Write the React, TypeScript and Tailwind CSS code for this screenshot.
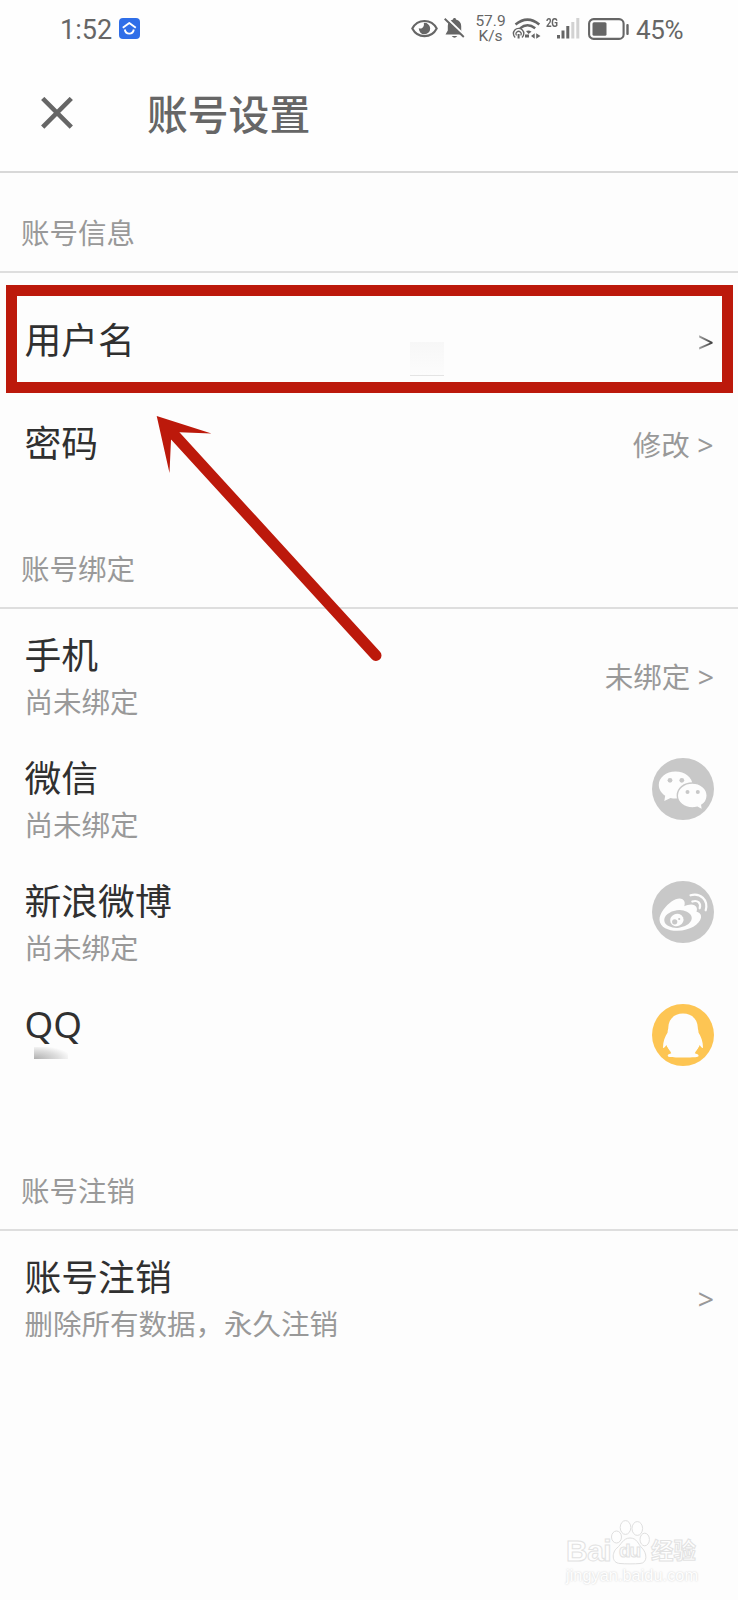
import type { ReactNode } from "react";

function StatusBar() {
  return (
    <div className="flex h-[58px] items-center pl-[60px] text-[#666] font-['Roboto','Noto_Sans_CJK_SC',sans-serif]">
      <span className="w-[59px] pt-[2px] text-[27px] leading-[30px]">1:52</span>
      <svg className="mb-[2px] h-[21px] w-[21px]" viewBox="0 0 21 21" fill="none">
        <rect width="21" height="21" rx="4" fill="#2f6ee8" />
        <path d="M3.8 9.8 L10.3 5 L16.8 9.8" stroke="#fff" strokeWidth="1.9" strokeLinejoin="round" />
        <path d="M5.8 11.5 C6.8 17 13.8 17 14.8 11.5" stroke="#fff" strokeWidth="1.9" />
      </svg>

      <svg className="mb-[2px] ml-[271px] h-[19px] w-[27px]" viewBox="0 0 27 19" fill="none">
        <path d="M1.3 9.5 C6.5 -.6 20.5 -.6 25.7 9.5 C20.5 19.6 6.5 19.6 1.3 9.5Z" stroke="#666" strokeWidth="2.1" />
        <path d="M12.8 3.9 A5.7 5.7 0 1 1 7.8 9.1 C10 10.8 13.8 8 12.8 3.9Z" fill="#666" />
      </svg>
      <svg className="mb-[2px] ml-[6px] h-[22px] w-[21px]" viewBox="0 0 21 22" fill="none">
        <path d="M10.5 1 C11.5 1 12 1.7 12 2.5 C15.5 3.3 17.2 6 17.2 9 V13.5 L19.5 17.5 H1.5 L3.8 13.5 V9 C3.8 6 5.5 3.3 9 2.5 C9 1.7 9.5 1 10.5 1Z" fill="#666" />
        <path d="M7.7 19 H13.3 Q10.5 22.3 7.7 19Z" fill="#666" />
        <path d="M1.8 .3 L21 18.7" stroke="#fefefe" strokeWidth="2.2" />
        <path d="M.7 1.7 L19.8 20" stroke="#666" strokeWidth="1.9" />
      </svg>
      <div className="ml-[10px] w-[31px] text-center text-[15.5px] leading-[15px]">
        <div>57.9</div>
        <div>K/s</div>
      </div>
      <svg className="mb-[1px] ml-[6px] h-[23px] w-[29px]" viewBox="0 0 29 23" fill="none" stroke="#666">
        <path d="M3.5 7.5 Q15.5 -2.3 27.3 7.5" strokeWidth="2.5" />
        <path d="M8 11.3 Q15.5 5 23.2 11.3" strokeWidth="2.4" />
        <path d="M14 14 Q17 12.5 19.5 14.8 L16.5 17Z" fill="#666" stroke="none" />
        <path d="M3.2 20.5 A5.2 5.2 0 1 1 10 20.5" strokeWidth="1.4" />
        <path d="M4.5 18.5 A2.6 2.6 0 1 1 8.7 18.5" strokeWidth="1.2" />
        <path d="M6.6 17 V21.5" strokeWidth="2" />
        <path d="M13 19 H17" strokeWidth="3" />
        <path d="M19 19 L22.7 16.3 V21.7Z M24.2 16.3 L28.5 19 L24.2 21.7Z" fill="#666" stroke="none" />
      </svg>
      <span className="-mt-[13px] ml-[5px] w-[12px] origin-left scale-x-[.82] text-[12px] font-bold leading-[12px] tracking-[-0.4px]">2G</span>
      <svg className="-ml-[2px] mb-[2px] h-[22px] w-[24px]" viewBox="0 0 24 22">
        <rect x="1" y="18" width="3" height="3.5" fill="#666" />
        <rect x="5.5" y="13.5" width="3" height="8" fill="#666" />
        <rect x="10.3" y="9" width="3" height="12.5" fill="#666" />
        <rect x="15.3" y="5" width="3" height="16.5" fill="#d2d2d2" />
        <rect x="20.3" y="1" width="3" height="20.5" fill="#d2d2d2" />
      </svg>
      <svg className="mb-[1px] ml-[8px] h-[22px] w-[42px]" viewBox="0 0 42 22">
        <rect x="1.1" y="1.1" width="34.5" height="19.8" rx="4.5" fill="none" stroke="#666" strokeWidth="2.1" />
        <rect x="4.5" y="4.3" width="14" height="13.4" rx="1.5" fill="#666" />
        <rect x="38.3" y="6" width="2.4" height="11" rx="1" fill="#666" />
      </svg>
      <span className="ml-[6px] pt-[2px] text-[26px] leading-[30px] tracking-[-0.4px]">45%</span>
    </div>
  );
}

function SectionTitle({ children }: { children: ReactNode }) {
  return (
    <div className="flex h-[100px] items-end border-b-2 border-[#dedede] pb-[17px] pl-[21px] text-[28.5px] leading-[42px] text-[#999]">
      {children}
    </div>
  );
}

function Item({ title, hint, right }: { title: string; hint?: ReactNode; right?: ReactNode }) {
  return (
    <div className="flex h-[123px] justify-between pl-[24.5px] pr-[24px]">
      <div className="pt-[20px]">
        <div className="text-[36.8px] leading-[52px] text-[#303030]">{title}</div>
        <div className="text-[28.5px] leading-[42px] text-[#999]">{hint}</div>
      </div>
      {right}
    </div>
  );
}

function WechatIcon() {
  return (
    <svg className="mt-[26px] h-[62px] w-[62px]" viewBox="0 0 62 62">
      <circle cx="31" cy="31" r="31" fill="#c8c8c8" />
      <path d="M23.5 13.5 C14 13.5 6.8 19.4 6.8 27 C6.8 31.3 9.2 35.2 13.2 37.8 L12.3 43 L18.5 40 C20.1 40.4 21.8 40.6 23.5 40.6 C33 40.6 40.5 34.5 40.5 27 C40.5 19.4 33 13.5 23.5 13.5Z" fill="#fdfdfd" />
      <path d="M40.3 25 C32 25 25.3 30.4 25.3 37.5 C25.3 44.6 32 50 40.3 50 C42 50 43.8 49.7 45.4 49.2 L50.5 52 L49.8 47.2 C53.2 45 55.2 41.4 55.2 37.5 C55.2 30.4 48.5 25 40.3 25Z" fill="#fdfdfd" stroke="#c8c8c8" strokeWidth="1.4" />
      <g fill="#c8c8c8">
        <circle cx="18" cy="22.3" r="2.4" />
        <circle cx="29.8" cy="22.3" r="2.4" />
        <circle cx="35.5" cy="34" r="2" />
        <circle cx="45.8" cy="34" r="2" />
      </g>
    </svg>
  );
}

function WeiboIcon() {
  return (
    <svg className="mt-[26px] h-[62px] w-[62px]" viewBox="0 0 62 62" fill="none">
      <circle cx="31" cy="31" r="31" fill="#c8c8c8" />
      <path d="M30.5 18.3 C26 15.5 17.5 20.5 11.5 28.5 C8.8 32.2 7.3 36 7.5 39 C8 46.5 17 50 25.5 49.8 C38 49.5 47.5 43.5 49 36.8 C49.7 33.3 47.3 31.5 44.5 30.7 C45.5 28 45 25.5 42.5 24.2 C39.5 22.7 35.5 23.8 32.3 25.2 C33.2 22 32.8 19.7 30.5 18.3Z" fill="#fdfdfd" />
      <ellipse cx="26" cy="38" rx="13.8" ry="8.8" transform="rotate(-7 26 38)" fill="#c8c8c8" />
      <ellipse cx="24.8" cy="39" rx="6.8" ry="6.2" transform="rotate(-25 24.8 39)" fill="#fdfdfd" />
      <circle cx="22.7" cy="40.8" r="2.6" fill="#c8c8c8" />
      <circle cx="27.2" cy="38" r="1.1" fill="#c8c8c8" />
      <path d="M38.5 14.3 C48.5 11.5 56.5 19 53.7 29.3" stroke="#fdfdfd" strokeWidth="2.2" strokeLinecap="round" />
      <path d="M40.3 20.5 C45.8 18.8 49.3 22 47.7 27.3" stroke="#fdfdfd" strokeWidth="2.2" strokeLinecap="round" />
    </svg>
  );
}

function QQIcon() {
  return (
    <svg className="mt-[26px] h-[62px] w-[62px]" viewBox="0 0 62 62">
      <circle cx="31" cy="31" r="31" fill="#fdc553" />
      <path d="M31 9.5 C22 9.5 16.5 15.5 16.3 23.5 C16.3 25.3 15.6 26 15.6 28.5 C13 32.5 11 37.5 11 43.5 C11.2 44.8 12.5 43.5 14.5 41 C15.2 44 16.8 46.5 19 48.3 C17 49 15.5 50.3 15.8 52 C16.3 53.6 22 53.4 31 53.4 C40 53.4 46 53.6 46.5 52 C46.8 50.3 45.2 49 43.2 48.3 C45.4 46.5 46.8 44 47.6 41 C49.5 43.5 50.8 44.8 51 43.5 C51 37.5 49 32.5 46.5 28.5 C46.5 26 45.8 25.3 45.8 23.5 C45.6 15.5 40 9.5 31 9.5Z" fill="#fdfdfd" />
      <path d="M14.5 42 L19.3 49.3 L15.5 50.8 Q13.5 49 15 46.8Z M47.6 42 L42.8 49.3 L46.7 50.8 Q48.6 49 47.1 46.8Z" fill="#fdc553" />
    </svg>
  );
}

function Watermark() {
  return (
    <div className="absolute left-[566px] top-[1519px] w-[136px] font-['Liberation_Sans','Noto_Sans_CJK_SC',sans-serif] text-[#fefefe]">
      <div className="flex h-[46px] items-end font-bold">
        <span className="w-[45px] text-[30px] leading-[28px] tracking-[-0.5px] [-webkit-text-stroke:1px_#e2e2e2]">Bai</span>
        <div className="relative h-[46px] w-[39px]">
          <svg className="h-[46px] w-[39px]" viewBox="0 0 39 46" fill="#fefefe" stroke="#dfdfdf">
            <ellipse cx="5.5" cy="18" rx="5" ry="6" />
            <ellipse cx="14.5" cy="8.5" rx="5.3" ry="6.9" />
            <ellipse cx="26.3" cy="9.5" rx="5.3" ry="6.9" />
            <ellipse cx="33.7" cy="20.5" rx="4.7" ry="6.3" />
            <path d="M19 19 C12 19 10 26 6 29 C1 33 0 44 9 44.5 C14 45 24 45 29 44.5 C37 44 36 34 31 29 C27 25 26 19 19 19Z" />
          </svg>
          <span className="absolute left-[8px] top-[21px] text-[19px] leading-[22px] tracking-[-1px] [-webkit-text-stroke:1px_#e2e2e2]">du</span>
        </div>
        <span className="ml-[1px] text-[22.5px] leading-[26px] [-webkit-text-stroke:1px_#e2e2e2]">经验</span>
      </div>
      <div className="text-[16.4px] leading-[20px] [text-shadow:0_0_2px_#ccc]">jingyan.baidu.com</div>
    </div>
  );
}

export default function App() {
  return (
    <div className="relative h-[1600px] w-[738px] overflow-hidden bg-[#fdfdfd] font-['Noto_Sans','Noto_Sans_CJK_SC',sans-serif]">
      <header className="h-[173px] border-b-2 border-[#d8d8d8] bg-[#fefefe]">
        <StatusBar />
        <div className="flex h-[113px] items-start pl-[41px] text-[#666]">
          <svg className="mt-[39px] h-[32px] w-[32px]" viewBox="0 0 32 32" stroke="#666" strokeWidth="4.6">
            <path d="M1.7 1.5 L30.3 30.2 M30.3 1.5 L1.7 30.2" />
          </svg>
          <h1 className="ml-[74px] mt-[26px] text-[40.8px] font-medium leading-[58px] font-['Noto_Sans_CJK_SC',sans-serif]">账号设置</h1>
        </div>
      </header>

      <SectionTitle>账号信息</SectionTitle>
      <div className="pt-[15px]">
        <div className="relative flex h-[103px] items-center justify-between pl-[24.5px] pr-[24px]">
          <span className="text-[36.8px] leading-[52px] text-[#303030]">用户名</span>
          <span className="bg-linear-to-r from-[#aaa] to-[#333] bg-clip-text pt-[5px] text-[28.5px] leading-[42px] text-transparent">&gt;</span>
          <div className="absolute left-[410px] top-[54px] h-[34px] w-[34px] border-b border-[#e4e4e4] bg-linear-to-b from-[#f7f7f7] to-[#fcfcfc]" />
          <div className="absolute left-[6px] top-[-3px] h-[108px] w-[727px] border-[11px] border-[#bc190b]" />
        </div>
        <div className="flex h-[103px] items-center justify-between pl-[24.5px] pr-[24.5px]">
          <span className="text-[36.8px] leading-[52px] text-[#303030]">密码</span>
          <span className="pt-[4px] text-[28.5px] leading-[42px] text-[#999]">修改 &gt;</span>
        </div>
      </div>

      <div className="pt-[15px]">
        <SectionTitle>账号绑定</SectionTitle>
        <Item
          title="手机"
          hint="尚未绑定"
          right={<span className="mt-[47px] text-[28.5px] leading-[42px] text-[#999]">未绑定 &gt;</span>}
        />
        <Item title="微信" hint="尚未绑定" right={<WechatIcon />} />
        <Item title="新浪微博" hint="尚未绑定" right={<WeiboIcon />} />
        <Item
          title="QQ"
          hint={
            <div className="ml-[9px] mt-[-3px] h-[12px] w-[34px] bg-[radial-gradient(ellipse_at_0%_100%,#b0b0b0_0%,#ddd_50%,#fdfdfd_80%)]" />
          }
          right={<QQIcon />}
        />
      </div>

      <div className="pt-[30px]">
        <SectionTitle>账号注销</SectionTitle>
        <Item
          title="账号注销"
          hint="删除所有数据，永久注销"
          right={<span className="mt-[47px] text-[28.5px] leading-[42px] text-[#999]">&gt;</span>}
        />
      </div>

      {/* Arrow pointing at the highlighted row */}
      <svg className="absolute left-[150px] top-[410px] h-[260px] w-[240px]" viewBox="150 410 240 260">
        <path d="M156.7 416 L211.5 433.5 L179.5 432.3 L171 439.8 L169.5 473Z" fill="#bc190b" />
        <path d="M174 434.5 L376 655.5" stroke="#bc190b" strokeWidth="11" strokeLinecap="round" />
      </svg>

      <Watermark />
    </div>
  );
}
